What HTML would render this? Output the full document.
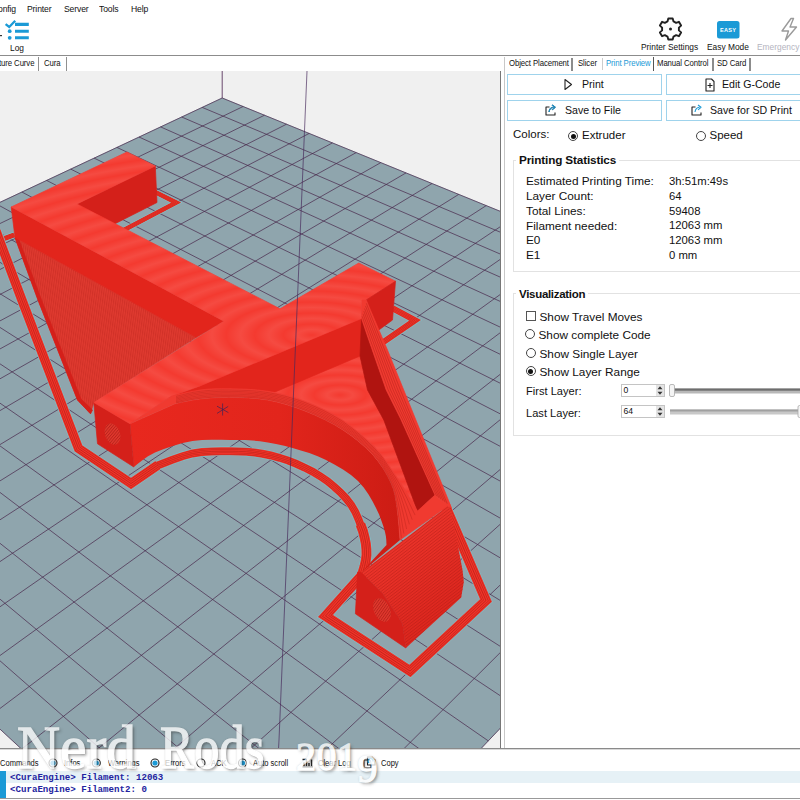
<!DOCTYPE html>
<html><head><meta charset="utf-8"><title>Repetier-Host</title>
<style>
html,body{margin:0;padding:0;}
body{width:800px;height:800px;overflow:hidden;background:#fff;position:relative;font-family:"Liberation Sans",sans-serif;color:#111;}
.abs{position:absolute;white-space:nowrap;}
.menu{font-size:9.4px;top:3px;color:#111;letter-spacing:-0.15px;transform:scaleX(0.92);transform-origin:0 0;}
.tl{font-size:9.1px;top:42px;color:#111;transform:scaleX(0.92);transform-origin:0 0;}
.tab{font-size:8.5px;top:58px;color:#111;letter-spacing:-0.1px;transform:scaleX(0.915);transform-origin:0 0;}
.btn{position:absolute;border:1px solid #9fd3ec;background:#fff;box-sizing:border-box;}
.btxt{font-size:10.6px;color:#111;}
.lbl{font-size:11.5px;color:#111;}
.st{font-size:11.8px;color:#111;}
.sv{font-size:11.3px;color:#111;}
.hd{font-size:11.75px;color:#111;font-weight:bold;letter-spacing:-0.15px;}
.radio{position:absolute;width:10px;height:10px;border:1px solid #444;border-radius:50%;background:#fff;box-sizing:border-box;}
.radio.on::after{content:"";position:absolute;left:1.5px;top:1.5px;width:5px;height:5px;border-radius:50%;background:#111;}
.lt{font-size:8.4px;top:757.5px;color:#111;transform:scaleX(0.9);transform-origin:0 0;}
.wm{font-family:"Liberation Serif",serif;color:#fff;-webkit-text-stroke:1.3px #fff;opacity:0.76;text-shadow:2px 2px 3px rgba(40,40,40,0.6),0 0 2px rgba(100,100,100,0.7);transform-origin:0 0;line-height:1.15;}
.log{font-family:"Liberation Mono",monospace;font-size:9.15px;color:#2323a0;left:10px;font-weight:bold;}
</style></head><body>
<!-- menu -->
<div class="abs menu" style="left:-2.5px">onfig</div>
<div class="abs menu" style="left:27px">Printer</div>
<div class="abs menu" style="left:64px">Server</div>
<div class="abs menu" style="left:99px">Tools</div>
<div class="abs menu" style="left:131px">Help</div>
<!-- toolbar -->
<svg class="abs" style="left:0;top:16px" width="800" height="40" viewBox="0 16 800 40">
 <g stroke="#1b9ad6" stroke-width="3.1" fill="none">
  <path d="M15,24.4 L28.8,24.4 M15,31.2 L28.8,31.2 M15,37.8 L28.8,37.8"/>
  <path d="M5.6,24.2 L9.2,27 L15.2,20.8" stroke-width="2.3"/>
 </g>
 <circle cx="9.7" cy="31.2" r="1.9" fill="#1b9ad6"/><circle cx="9.7" cy="37.8" r="1.9" fill="#1b9ad6"/>
 <rect x="0" y="35" width="2" height="1.2" fill="#333"/>
 <!-- gear -->
 <g transform="translate(670.5,29)" fill="none" stroke="#222" stroke-width="1.9" stroke-linejoin="round">
  <path d="M-2.2,-10.5 L2.2,-10.5 L3,-7.6 L5.6,-6.2 L8.4,-7.2 L10.6,-3.4 L8.4,-1.4 L8.4,1.4 L10.6,3.4 L8.4,7.2 L5.6,6.2 L3,7.6 L2.2,10.5 L-2.2,10.5 L-3,7.6 L-5.6,6.2 L-8.4,7.2 L-10.6,3.4 L-8.4,1.4 L-8.4,-1.4 L-10.6,-3.4 L-8.4,-7.2 L-5.6,-6.2 L-3,-7.6 Z"/>
  <circle r="1.5" fill="#222" stroke="none"/>
 </g>
 <rect x="717" y="21" width="22.5" height="17.5" rx="2.5" fill="#1b9ad6"/>
 <text x="728.2" y="31.8" font-size="5.6" font-weight="bold" fill="#fff" text-anchor="middle" font-family="Liberation Sans, sans-serif" letter-spacing="0.3">EASY</text>
 <path d="M791,18.5 L782,31 L788.5,31 L785.5,40 L796.5,27 L790,27 L793.5,18.5 Z" fill="none" stroke="#9a9a9a" stroke-width="1.4" stroke-linejoin="round"/>
</svg>
<div class="abs tl" style="left:9.8px;top:42.8px">Log</div>
<div class="abs tl" style="left:641px">Printer Settings</div>
<div class="abs tl" style="left:707px">Easy Mode</div>
<div class="abs tl" style="left:757px;color:#b4b4c0">Emergency</div>
<div class="abs" style="left:0;top:55px;width:800px;height:1px;background:#8c8c8c"></div>
<!-- left tabs -->
<div class="abs tab" style="left:-1px">ture Curve</div>
<div class="abs" style="left:37.5px;top:57px;width:1.5px;height:13.5px;background:#909090"></div>
<div class="abs tab" style="left:44px">Cura</div>
<div class="abs" style="left:65.5px;top:57px;width:1.5px;height:13.5px;background:#909090"></div>
<!-- 3D view -->
<div class="abs" style="left:0;top:71px;width:500px;height:677px;background:#f0f0f0;overflow:hidden">
<svg width="500" height="677" viewBox="0 71 500 677" style="position:absolute;left:0;top:0">
<defs><linearGradient id="wallg" gradientUnits="userSpaceOnUse" x1="130" y1="0" x2="400" y2="0"><stop offset="0" stop-color="#e8281e"/><stop offset="0.55" stop-color="#e2251c"/><stop offset="1" stop-color="#cc1c14"/></linearGradient><radialGradient id="moire" gradientUnits="userSpaceOnUse" cx="0" cy="0" r="11" gradientTransform="translate(312,335) scale(2.6,1)" spreadMethod="repeat"><stop offset="0" stop-color="#fff" stop-opacity="0"/><stop offset="0.5" stop-color="#fff" stop-opacity="0.085"/><stop offset="1" stop-color="#fff" stop-opacity="0"/></radialGradient><radialGradient id="moire2" gradientUnits="userSpaceOnUse" cx="0" cy="0" r="10" gradientTransform="translate(340,395) scale(2.6,1)" spreadMethod="repeat"><stop offset="0" stop-color="#fff" stop-opacity="0"/><stop offset="0.5" stop-color="#fff" stop-opacity="0.085"/><stop offset="1" stop-color="#fff" stop-opacity="0"/></radialGradient><pattern id="tri" width="2.2" height="8" patternUnits="userSpaceOnUse" patternTransform="rotate(8)"><rect width="1" height="8" fill="#b8241c" opacity="0.4"/></pattern><pattern id="lay" width="8" height="2.4" patternUnits="userSpaceOnUse" patternTransform="rotate(-37.5)"><rect width="8" height="0.8" fill="#a81a12" opacity="0.42"/></pattern><pattern id="hole" width="8" height="2.2" patternUnits="userSpaceOnUse" patternTransform="rotate(-30)"><rect width="8" height="2.2" fill="#e2382e"/><rect width="8" height="0.9" fill="#b8241c"/></pattern><linearGradient id="blk" x1="0" y1="0" x2="0.6" y2="1"><stop offset="0" stop-color="#f43c32"/><stop offset="1" stop-color="#da241c"/></linearGradient></defs>
<polygon points="222.2,98.0 853.4,355.3 266.1,975.5 -377.5,379.6" fill="#8fa5ad" stroke="#8fa5ad" stroke-width="0.7" stroke-linejoin="round" />
<path d="M222.2,98.0 L-377.5,379.6 M222.2,98.0 L853.4,355.3 M243.1,106.5 L-359.3,396.5 M202.2,107.4 L836.7,373.0 M264.5,115.2 L-340.4,414.0 M181.7,117.0 L819.3,391.3 M286.5,124.2 L-320.8,432.1 M160.6,126.9 L801.3,410.3 M309.2,133.4 L-300.5,451.0 M139.0,137.0 L782.7,430.0 M332.4,142.9 L-279.4,470.5 M116.9,147.4 L763.3,450.5 M356.2,152.6 L-257.4,490.8 M94.1,158.1 L743.2,471.7 M380.8,162.6 L-234.6,512.0 M70.7,169.1 L722.2,493.9 M406.0,172.9 L-210.8,534.0 M46.6,180.4 L700.4,516.9 M432.0,183.5 L-186.0,557.0 M21.9,192.0 L677.8,540.8 M458.7,194.4 L-160.1,580.9 M-3.5,204.0 L654.1,565.8 M486.2,205.6 L-133.2,605.9 M-29.7,216.3 L629.5,591.8 M514.6,217.1 L-105.0,631.9 M-56.7,228.9 L603.7,619.0 M543.8,229.1 L-75.5,659.2 M-84.4,242.0 L576.8,647.4 M573.9,241.3 L-44.7,687.8 M-113.0,255.4 L548.6,677.2 M605.0,254.0 L-12.3,717.7 M-142.5,269.3 L519.2,708.3 M637.1,267.1 L21.6,749.1 M-173.0,283.5 L488.3,740.9 M670.2,280.6 L57.2,782.1 M-204.3,298.3 L455.8,775.2 M704.4,294.5 L94.7,816.8 M-236.7,313.5 L421.7,811.2 M739.8,308.9 L134.1,853.3 M-270.2,329.2 L385.9,849.1 M776.4,323.9 L175.7,891.8 M-304.8,345.4 L348.1,889.0 M814.2,339.3 L219.7,932.5 M-340.5,362.2 L308.2,931.1 M853.4,355.3 L266.1,975.5 M-377.5,379.6 L266.1,975.5" stroke="#48264a" stroke-width="0.7" fill="none"/>
<path d="M222.2,98 L222.2,60" stroke="#5a3560" stroke-width="0.9" fill="none"/>
<polyline points="-8.0,243.0 14.0,235.0" fill="none" stroke="#7cc4cc" stroke-width="6.2" stroke-linejoin="miter" />
<polyline points="-8.0,243.0 14.0,235.0" fill="none" stroke="#f03329" stroke-width="5" stroke-linejoin="miter" />
<polyline points="-8.0,243.0 14.0,235.0" fill="none" stroke="#c4261c" stroke-width="4.0" stroke-linejoin="miter" />
<polyline points="-8.0,243.0 14.0,235.0" fill="none" stroke="#f03329" stroke-width="3.4" stroke-linejoin="miter" />
<polyline points="-8.0,243.0 14.0,235.0" fill="none" stroke="#c4261c" stroke-width="2.3" stroke-linejoin="miter" />
<polyline points="-8.0,243.0 14.0,235.0" fill="none" stroke="#f03329" stroke-width="1.7" stroke-linejoin="miter" />
<polyline points="-8.0,243.0 14.0,235.0" fill="none" stroke="#c4261c" stroke-width="0.5" stroke-linejoin="miter" />
<polyline points="150.0,469.5 150.1,469.2 150.2,468.8 151.3,468.0 155.0,466.5 162.1,463.7 171.7,460.0 182.4,456.2 192.5,453.5 202.0,452.1 211.6,451.4 221.0,451.2 230.0,451.2 238.4,451.4 246.5,451.7 254.4,452.5 262.5,453.8 270.9,455.5 279.5,457.8 288.0,460.5 296.2,463.8 304.4,467.5 312.5,471.6 320.3,476.3 327.5,481.2 334.2,486.7 340.6,492.6 346.3,498.7 351.2,505.0 355.3,512.0 358.6,519.6 361.2,526.5 363.0,531.2" fill="none" stroke="#7cc4cc" stroke-width="9.2" stroke-linejoin="miter" />
<polyline points="150.0,469.5 150.1,469.2 150.2,468.8 151.3,468.0 155.0,466.5 162.1,463.7 171.7,460.0 182.4,456.2 192.5,453.5 202.0,452.1 211.6,451.4 221.0,451.2 230.0,451.2 238.4,451.4 246.5,451.7 254.4,452.5 262.5,453.8 270.9,455.5 279.5,457.8 288.0,460.5 296.2,463.8 304.4,467.5 312.5,471.6 320.3,476.3 327.5,481.2 334.2,486.7 340.6,492.6 346.3,498.7 351.2,505.0 355.3,512.0 358.6,519.6 361.2,526.5 363.0,531.2" fill="none" stroke="#f03329" stroke-width="8" stroke-linejoin="miter" />
<polyline points="150.0,469.5 150.1,469.2 150.2,468.8 151.3,468.0 155.0,466.5 162.1,463.7 171.7,460.0 182.4,456.2 192.5,453.5 202.0,452.1 211.6,451.4 221.0,451.2 230.0,451.2 238.4,451.4 246.5,451.7 254.4,452.5 262.5,453.8 270.9,455.5 279.5,457.8 288.0,460.5 296.2,463.8 304.4,467.5 312.5,471.6 320.3,476.3 327.5,481.2 334.2,486.7 340.6,492.6 346.3,498.7 351.2,505.0 355.3,512.0 358.6,519.6 361.2,526.5 363.0,531.2" fill="none" stroke="#c4261c" stroke-width="6.4" stroke-linejoin="miter" />
<polyline points="150.0,469.5 150.1,469.2 150.2,468.8 151.3,468.0 155.0,466.5 162.1,463.7 171.7,460.0 182.4,456.2 192.5,453.5 202.0,452.1 211.6,451.4 221.0,451.2 230.0,451.2 238.4,451.4 246.5,451.7 254.4,452.5 262.5,453.8 270.9,455.5 279.5,457.8 288.0,460.5 296.2,463.8 304.4,467.5 312.5,471.6 320.3,476.3 327.5,481.2 334.2,486.7 340.6,492.6 346.3,498.7 351.2,505.0 355.3,512.0 358.6,519.6 361.2,526.5 363.0,531.2" fill="none" stroke="#f03329" stroke-width="5.44" stroke-linejoin="miter" />
<polyline points="150.0,469.5 150.1,469.2 150.2,468.8 151.3,468.0 155.0,466.5 162.1,463.7 171.7,460.0 182.4,456.2 192.5,453.5 202.0,452.1 211.6,451.4 221.0,451.2 230.0,451.2 238.4,451.4 246.5,451.7 254.4,452.5 262.5,453.8 270.9,455.5 279.5,457.8 288.0,460.5 296.2,463.8 304.4,467.5 312.5,471.6 320.3,476.3 327.5,481.2 334.2,486.7 340.6,492.6 346.3,498.7 351.2,505.0 355.3,512.0 358.6,519.6 361.2,526.5 363.0,531.2" fill="none" stroke="#c4261c" stroke-width="3.68" stroke-linejoin="miter" />
<polyline points="150.0,469.5 150.1,469.2 150.2,468.8 151.3,468.0 155.0,466.5 162.1,463.7 171.7,460.0 182.4,456.2 192.5,453.5 202.0,452.1 211.6,451.4 221.0,451.2 230.0,451.2 238.4,451.4 246.5,451.7 254.4,452.5 262.5,453.8 270.9,455.5 279.5,457.8 288.0,460.5 296.2,463.8 304.4,467.5 312.5,471.6 320.3,476.3 327.5,481.2 334.2,486.7 340.6,492.6 346.3,498.7 351.2,505.0 355.3,512.0 358.6,519.6 361.2,526.5 363.0,531.2" fill="none" stroke="#f03329" stroke-width="2.72" stroke-linejoin="miter" />
<polyline points="150.0,469.5 150.1,469.2 150.2,468.8 151.3,468.0 155.0,466.5 162.1,463.7 171.7,460.0 182.4,456.2 192.5,453.5 202.0,452.1 211.6,451.4 221.0,451.2 230.0,451.2 238.4,451.4 246.5,451.7 254.4,452.5 262.5,453.8 270.9,455.5 279.5,457.8 288.0,460.5 296.2,463.8 304.4,467.5 312.5,471.6 320.3,476.3 327.5,481.2 334.2,486.7 340.6,492.6 346.3,498.7 351.2,505.0 355.3,512.0 358.6,519.6 361.2,526.5 363.0,531.2" fill="none" stroke="#c4261c" stroke-width="0.8" stroke-linejoin="miter" />
<polyline points="-4.0,231.0 21.9,300.0 78.5,448.5 131.0,483.5 158.0,465.0" fill="none" stroke="#7cc4cc" stroke-width="10.7" stroke-linejoin="miter" />
<polyline points="-4.0,231.0 21.9,300.0 78.5,448.5 131.0,483.5 158.0,465.0" fill="none" stroke="#f03329" stroke-width="9.5" stroke-linejoin="miter" />
<polyline points="-4.0,231.0 21.9,300.0 78.5,448.5 131.0,483.5 158.0,465.0" fill="none" stroke="#c4261c" stroke-width="7.6" stroke-linejoin="miter" />
<polyline points="-4.0,231.0 21.9,300.0 78.5,448.5 131.0,483.5 158.0,465.0" fill="none" stroke="#f03329" stroke-width="6.46" stroke-linejoin="miter" />
<polyline points="-4.0,231.0 21.9,300.0 78.5,448.5 131.0,483.5 158.0,465.0" fill="none" stroke="#c4261c" stroke-width="4.37" stroke-linejoin="miter" />
<polyline points="-4.0,231.0 21.9,300.0 78.5,448.5 131.0,483.5 158.0,465.0" fill="none" stroke="#f03329" stroke-width="3.23" stroke-linejoin="miter" />
<polyline points="-4.0,231.0 21.9,300.0 78.5,448.5 131.0,483.5 158.0,465.0" fill="none" stroke="#c4261c" stroke-width="0.95" stroke-linejoin="miter" />
<polyline points="360.4,524.2 363.0,531.2 364.6,537.5 365.8,543.5 366.4,549.4 366.5,555.0 365.8,560.7 364.5,566.5 363.0,571.5 362.0,575.0 325.5,616.0 410.0,671.0 486.0,600.5 445.0,505.0" fill="none" stroke="#7cc4cc" stroke-width="11.2" stroke-linejoin="miter" />
<polyline points="360.4,524.2 363.0,531.2 364.6,537.5 365.8,543.5 366.4,549.4 366.5,555.0 365.8,560.7 364.5,566.5 363.0,571.5 362.0,575.0 325.5,616.0 410.0,671.0 486.0,600.5 445.0,505.0" fill="none" stroke="#f03329" stroke-width="10" stroke-linejoin="miter" />
<polyline points="360.4,524.2 363.0,531.2 364.6,537.5 365.8,543.5 366.4,549.4 366.5,555.0 365.8,560.7 364.5,566.5 363.0,571.5 362.0,575.0 325.5,616.0 410.0,671.0 486.0,600.5 445.0,505.0" fill="none" stroke="#c4261c" stroke-width="8.0" stroke-linejoin="miter" />
<polyline points="360.4,524.2 363.0,531.2 364.6,537.5 365.8,543.5 366.4,549.4 366.5,555.0 365.8,560.7 364.5,566.5 363.0,571.5 362.0,575.0 325.5,616.0 410.0,671.0 486.0,600.5 445.0,505.0" fill="none" stroke="#f03329" stroke-width="6.8" stroke-linejoin="miter" />
<polyline points="360.4,524.2 363.0,531.2 364.6,537.5 365.8,543.5 366.4,549.4 366.5,555.0 365.8,560.7 364.5,566.5 363.0,571.5 362.0,575.0 325.5,616.0 410.0,671.0 486.0,600.5 445.0,505.0" fill="none" stroke="#c4261c" stroke-width="4.6" stroke-linejoin="miter" />
<polyline points="360.4,524.2 363.0,531.2 364.6,537.5 365.8,543.5 366.4,549.4 366.5,555.0 365.8,560.7 364.5,566.5 363.0,571.5 362.0,575.0 325.5,616.0 410.0,671.0 486.0,600.5 445.0,505.0" fill="none" stroke="#f03329" stroke-width="3.4" stroke-linejoin="miter" />
<polyline points="360.4,524.2 363.0,531.2 364.6,537.5 365.8,543.5 366.4,549.4 366.5,555.0 365.8,560.7 364.5,566.5 363.0,571.5 362.0,575.0 325.5,616.0 410.0,671.0 486.0,600.5 445.0,505.0" fill="none" stroke="#c4261c" stroke-width="1.0" stroke-linejoin="miter" />
<polyline points="382.0,343.0 415.0,320.3 393.0,308.5" fill="none" stroke="#7cc4cc" stroke-width="7.5" stroke-linejoin="miter" />
<polyline points="382.0,343.0 415.0,320.3 393.0,308.5" fill="none" stroke="#f03329" stroke-width="6.3" stroke-linejoin="miter" />
<polyline points="382.0,343.0 415.0,320.3 393.0,308.5" fill="none" stroke="#c4261c" stroke-width="5.04" stroke-linejoin="miter" />
<polyline points="382.0,343.0 415.0,320.3 393.0,308.5" fill="none" stroke="#f03329" stroke-width="4.28" stroke-linejoin="miter" />
<polyline points="382.0,343.0 415.0,320.3 393.0,308.5" fill="none" stroke="#c4261c" stroke-width="2.9" stroke-linejoin="miter" />
<polyline points="382.0,343.0 415.0,320.3 393.0,308.5" fill="none" stroke="#f03329" stroke-width="2.14" stroke-linejoin="miter" />
<polyline points="382.0,343.0 415.0,320.3 393.0,308.5" fill="none" stroke="#c4261c" stroke-width="0.63" stroke-linejoin="miter" />
<polyline points="155.0,192.0 176.2,202.6 122.0,231.0" fill="none" stroke="#7cc4cc" stroke-width="5.8" stroke-linejoin="miter" />
<polyline points="155.0,192.0 176.2,202.6 122.0,231.0" fill="none" stroke="#f03329" stroke-width="4.6" stroke-linejoin="miter" />
<polyline points="155.0,192.0 176.2,202.6 122.0,231.0" fill="none" stroke="#c4261c" stroke-width="3.68" stroke-linejoin="miter" />
<polyline points="155.0,192.0 176.2,202.6 122.0,231.0" fill="none" stroke="#f03329" stroke-width="3.13" stroke-linejoin="miter" />
<polyline points="155.0,192.0 176.2,202.6 122.0,231.0" fill="none" stroke="#c4261c" stroke-width="2.12" stroke-linejoin="miter" />
<polyline points="155.0,192.0 176.2,202.6 122.0,231.0" fill="none" stroke="#f03329" stroke-width="1.56" stroke-linejoin="miter" />
<polyline points="155.0,192.0 176.2,202.6 122.0,231.0" fill="none" stroke="#c4261c" stroke-width="0.46" stroke-linejoin="miter" />
<polygon points="77.0,204.0 155.3,166.0 157.0,202.5 112.5,225.0 105.0,228.0" fill="#d4201a" stroke="#d4201a" stroke-width="0.7" stroke-linejoin="round" />
<polygon points="15.0,237.5 196.2,337.5 93.8,402.5 90.5,413.8 77.5,400.0 38.0,300.0" fill="#e03a30" stroke="#e03a30" stroke-width="0.7" stroke-linejoin="round" />
<polygon points="15.0,237.5 196.2,337.5 93.8,402.5 90.5,413.8 77.5,400.0 38.0,300.0" fill="url(#tri)" stroke="none" stroke-width="0.7" stroke-linejoin="round" />
<polygon points="15.0,237.5 18.5,238.5 41.5,300.0 81.0,399.0 92.5,410.0 90.5,413.8 77.5,400.0 38.0,300.0" fill="#d4201a" stroke="#d4201a" stroke-width="0.7" stroke-linejoin="round" />
<polygon points="11.2,207.0 223.8,321.2 196.2,337.5 15.0,237.5" fill="#e2251c" stroke="#e2251c" stroke-width="0.7" stroke-linejoin="round" />
<polygon points="130.0,423.8 175.0,403.8 179.4,402.8 185.6,401.5 192.8,400.1 200.0,399.0 207.0,398.3 214.2,397.8 221.9,397.5 230.0,397.5 238.8,397.6 248.3,398.0 257.9,398.7 267.5,400.0 276.9,402.0 286.2,404.5 295.6,407.5 305.0,411.0 314.7,415.0 324.5,419.6 334.1,424.6 343.0,430.0 351.3,435.8 359.2,441.9 366.5,448.4 373.0,455.0 378.6,461.9 383.5,469.0 387.6,476.1 391.0,483.0 393.4,489.3 394.9,495.2 396.0,501.3 397.0,508.0 398.0,516.3 398.9,525.6 399.5,534.1 400.0,540.0 361.2,572.5 386.5,545.0 386.4,542.9 386.3,540.0 385.9,536.3 385.0,532.0 383.5,526.8 381.5,520.9 379.1,514.5 376.0,508.0 372.5,501.3 368.4,494.3 363.7,487.4 358.0,481.0 351.0,475.1 343.0,469.6 334.4,464.5 326.0,460.0 317.7,456.2 309.3,453.1 300.8,450.4 292.5,448.0 284.2,445.8 276.0,444.0 267.9,442.4 260.0,441.2 252.5,440.5 245.3,440.1 238.0,440.0 230.0,440.0 221.2,439.8 211.7,439.7 202.1,440.0 192.5,441.0 182.7,443.1 172.7,445.9 163.2,449.2 155.0,452.5 148.0,456.3 142.0,460.5 137.2,464.3 133.8,467.0" fill="url(#wallg)" stroke="none" stroke-width="0.7" stroke-linejoin="round" />
<polygon points="93.8,402.5 130.0,423.8 133.8,467.0 97.5,443.8" fill="#d4201a" stroke="#d4201a" stroke-width="0.7" stroke-linejoin="round" />
<ellipse cx="112.5" cy="434" rx="7.5" ry="11" fill="url(#hole)" transform="rotate(-20 112.5 434)"/>
<polygon points="200.0,386.0 361.5,318.5 372.0,356.0 392.0,420.0 425.0,505.0 417.5,511.0 415.3,507.2 412.1,501.8 408.5,495.7 405.0,490.0 401.9,485.0 398.8,480.1 395.5,475.2 392.0,470.0 388.4,464.7 384.7,459.2 380.4,453.5 375.0,447.5 368.1,440.8 360.0,433.5 351.3,426.4 342.5,420.0 333.5,414.5 324.1,409.5 314.5,405.1 305.0,401.2 295.6,398.0 286.2,395.2 276.9,393.0 267.5,391.2 257.9,390.0 248.3,389.3 238.8,388.9 230.0,388.8 221.9,388.7 214.5,388.8 207.2,389.2 200.0,390.0" fill="#f43a30" stroke="#f43a30" stroke-width="0.7" stroke-linejoin="round" />
<polygon points="200.0,386.0 361.5,318.5 372.0,356.0 392.0,420.0 425.0,505.0 417.5,511.0 415.3,507.2 412.1,501.8 408.5,495.7 405.0,490.0 401.9,485.0 398.8,480.1 395.5,475.2 392.0,470.0 388.4,464.7 384.7,459.2 380.4,453.5 375.0,447.5 368.1,440.8 360.0,433.5 351.3,426.4 342.5,420.0 333.5,414.5 324.1,409.5 314.5,405.1 305.0,401.2 295.6,398.0 286.2,395.2 276.9,393.0 267.5,391.2 257.9,390.0 248.3,389.3 238.8,388.9 230.0,388.8 221.9,388.7 214.5,388.8 207.2,389.2 200.0,390.0" fill="url(#moire2)" stroke="none" stroke-width="0.7" stroke-linejoin="round" />
<polygon points="171.2,396.2 200.0,386.0 361.5,318.5 360.0,356.0 275.0,392.0 230.0,388.8" fill="#e2251c" stroke="#e2251c" stroke-width="0.7" stroke-linejoin="round" />
<polygon points="361.5,318.5 360.0,356.0 367.5,390.0 383.8,420.0 417.5,511.0 435.0,495.0 401.2,420.0 386.2,390.0 368.8,340.0" fill="#b01410" stroke="#b01410" stroke-width="0.7" stroke-linejoin="round" />
<polygon points="11.2,207.0 127.0,152.0 155.3,166.0 77.0,204.0 280.0,308.8 358.8,263.0 395.5,281.2 366.2,300.0 362.0,300.0 361.5,318.5 200.0,386.0 171.2,396.2 130.0,423.8 93.8,402.5 223.8,321.2" fill="#f43a30" stroke="#f43a30" stroke-width="0.7" stroke-linejoin="round" />
<polygon points="11.2,207.0 127.0,152.0 155.3,166.0 77.0,204.0 280.0,308.8 358.8,263.0 395.5,281.2 366.2,300.0 362.0,300.0 361.5,318.5 200.0,386.0 171.2,396.2 130.0,423.8 93.8,402.5 223.8,321.2" fill="url(#moire)" stroke="none" stroke-width="0.7" stroke-linejoin="round" />
<polygon points="366.2,300.0 395.5,281.2 392.5,320.0 377.5,331.0" fill="#d4201a" stroke="#d4201a" stroke-width="0.7" stroke-linejoin="round" />
<polygon points="362.0,300.0 366.2,300.0 387.5,350.0 407.8,400.0 424.0,440.0 451.4,507.5 447.5,506.2 435.0,495.0 401.2,420.0 386.2,390.0 368.8,340.0 361.5,318.5" fill="#f03a30" stroke="#f03a30" stroke-width="0.7" stroke-linejoin="round" />
<polygon points="171.2,396.2 176.4,395.0 183.8,393.2 192.1,391.4 200.0,390.0 207.2,389.2 214.5,388.8 221.9,388.7 230.0,388.8 238.8,388.9 248.3,389.3 257.9,390.0 267.5,391.2 276.9,393.0 286.2,395.2 295.6,398.0 305.0,401.2 314.5,405.1 324.1,409.5 333.5,414.5 342.5,420.0 351.3,426.4 360.0,433.5 368.1,440.8 375.0,447.5 380.4,453.5 384.7,459.2 388.4,464.7 392.0,470.0 395.5,475.2 398.8,480.1 401.9,485.0 405.0,490.0 408.5,495.7 412.1,501.8 415.3,507.2 417.5,511.0 435.0,495.0 447.5,506.2 400.0,540.0 399.5,534.1 398.9,525.6 398.0,516.3 397.0,508.0 396.0,501.3 394.9,495.2 393.4,489.3 391.0,483.0 387.6,476.1 383.5,469.0 378.6,461.9 373.0,455.0 366.5,448.4 359.2,441.9 351.3,435.8 343.0,430.0 334.1,424.6 324.5,419.6 314.7,415.0 305.0,411.0 295.6,407.5 286.2,404.5 276.9,402.0 267.5,400.0 257.9,398.7 248.3,398.0 238.8,397.6 230.0,397.5 221.9,397.5 214.2,397.8 207.0,398.3 200.0,399.0 192.8,400.1 185.6,401.5 179.4,402.8 175.0,403.8 130.0,423.8" fill="#f03a30" stroke="#f03a30" stroke-width="0.7" stroke-linejoin="round" />
<polygon points="361.2,572.5 447.5,506.2 451.0,510.0 462.5,570.0 463.8,582.0 461.2,597.5 405.8,648.0 402.5,623.5 383.0,594.0" fill="url(#blk)" stroke="none" stroke-width="0.7" stroke-linejoin="round" />
<polygon points="361.2,572.5 447.5,506.2 451.0,510.0 462.5,570.0 463.8,582.0 461.2,597.5 405.8,648.0 402.5,623.5 383.0,594.0" fill="url(#lay)" stroke="none" stroke-width="0.7" stroke-linejoin="round" />
<polyline points="176.0,396.4 180.2,395.4 186.1,393.9 193.0,392.4 200.0,391.3 206.9,390.6 214.2,390.1 221.8,389.9 230.0,390.0 238.8,390.2 248.3,390.5 257.9,391.2 267.5,392.5 276.9,394.3 286.2,396.5 295.6,399.3 305.0,402.6 314.5,406.5 324.1,410.9 333.6,415.9 342.6,421.4 351.3,427.7 359.9,434.7 367.9,441.8 374.7,448.6 380.2,454.7 384.5,460.5 388.2,466.2 391.7,471.7 395.1,476.9 398.1,481.9 400.9,486.9 403.7,492.1 406.9,498.2 410.1,504.9 413.0,510.9 415.1,515.1" fill="none" stroke="#a01810" stroke-width="0.6" stroke-linejoin="miter" opacity="0.5"/>
<polyline points="176.0,397.8 180.2,396.8 186.1,395.3 193.0,393.8 200.0,392.7 206.9,392.0 214.2,391.6 221.8,391.3 230.0,391.4 238.8,391.5 248.3,391.9 257.9,392.6 267.5,393.9 276.9,395.7 286.2,398.0 295.6,400.8 305.0,404.2 314.5,408.1 324.2,412.6 333.6,417.5 342.6,423.0 351.3,429.2 359.8,436.1 367.6,443.1 374.4,449.8 379.8,456.0 384.2,462.0 387.9,467.9 391.4,473.6 394.6,478.9 397.3,484.0 399.8,489.0 402.3,494.5 405.1,501.1 408.0,508.4 410.5,515.1 412.2,519.7" fill="none" stroke="#a01810" stroke-width="0.6" stroke-linejoin="miter" opacity="0.5"/>
<polyline points="176.0,399.1 180.2,398.1 186.1,396.7 193.0,395.2 200.0,394.1 206.9,393.5 214.2,393.0 221.8,392.8 230.0,392.8 238.8,392.9 248.3,393.3 257.9,394.0 267.5,395.3 276.9,397.1 286.2,399.5 295.6,402.3 305.0,405.7 314.6,409.7 324.2,414.2 333.7,419.2 342.7,424.6 351.4,430.7 359.7,437.4 367.4,444.3 374.1,450.9 379.5,457.3 383.9,463.5 387.7,469.6 391.1,475.5 394.1,480.9 396.5,486.0 398.7,491.2 400.9,496.9 403.3,504.0 405.8,512.0 407.9,519.3 409.4,524.3" fill="none" stroke="#a01810" stroke-width="0.6" stroke-linejoin="miter" opacity="0.5"/>
<polyline points="176.0,400.4 180.2,399.4 186.1,398.1 193.0,396.7 200.0,395.6 206.9,394.9 214.2,394.4 221.8,394.2 230.0,394.2 238.8,394.3 248.3,394.7 257.9,395.4 267.5,396.7 276.9,398.6 286.2,401.0 295.6,403.9 305.0,407.3 314.6,411.3 324.3,415.8 333.8,420.8 342.8,426.2 351.4,432.2 359.6,438.8 367.2,445.5 373.8,452.1 379.2,458.6 383.7,465.1 387.4,471.4 390.8,477.4 393.5,483.0 395.7,488.1 397.6,493.4 399.4,499.3 401.5,506.9 403.6,515.5 405.4,523.5 406.6,529.0" fill="none" stroke="#a01810" stroke-width="0.6" stroke-linejoin="miter" opacity="0.5"/>
<polyline points="176.0,401.7 180.2,400.8 186.1,399.4 193.0,398.1 200.0,397.0 206.9,396.3 214.2,395.8 221.8,395.6 230.0,395.6 238.8,395.7 248.3,396.1 257.9,396.8 267.5,398.1 276.9,400.0 286.2,402.4 295.6,405.4 305.0,408.9 314.6,412.9 324.4,417.4 333.9,422.4 342.9,427.8 351.4,433.7 359.5,440.1 366.9,446.8 373.4,453.4 378.9,459.9 383.4,466.6 387.2,473.1 390.4,479.4 393.0,485.0 394.9,490.2 396.4,495.5 398.0,501.7 399.7,509.8 401.4,519.1 402.8,527.7 403.9,533.6" fill="none" stroke="#a01810" stroke-width="0.6" stroke-linejoin="miter" opacity="0.5"/>
<polyline points="176.0,402.8 180.2,402.0 186.1,400.7 193.0,399.3 200.0,398.3 206.9,397.6 214.2,397.1 221.8,396.8 230.0,396.8 238.8,396.9 248.3,397.3 257.9,398.0 267.5,399.3 276.9,401.2 286.2,403.7 295.6,406.7 305.0,410.2 314.6,414.3 324.4,418.8 334.0,423.8 343.0,429.2 351.4,435.0 359.4,441.3 366.7,447.9 373.2,454.4 378.6,461.0 383.1,467.9 387.0,474.6 390.2,481.0 392.6,486.7 394.2,492.0 395.5,497.4 396.7,503.8 398.1,512.3 399.5,522.2 400.6,531.3 401.4,537.7" fill="none" stroke="#a01810" stroke-width="0.6" stroke-linejoin="miter" opacity="0.5"/>
<polyline points="362.2,316.4 370.4,340.0 388.2,390.0 402.8,420.0 436.7,496.2" fill="none" stroke="#a01810" stroke-width="0.6" stroke-linejoin="miter" opacity="0.6"/>
<polyline points="363.0,313.8 372.5,340.0 390.6,390.0 404.8,420.0 438.8,497.7" fill="none" stroke="#a01810" stroke-width="0.6" stroke-linejoin="miter" opacity="0.6"/>
<polyline points="363.8,311.1 374.5,340.0 393.1,390.0 406.8,420.0 440.9,499.2" fill="none" stroke="#a01810" stroke-width="0.6" stroke-linejoin="miter" opacity="0.6"/>
<polyline points="364.6,308.5 376.6,340.0 395.5,390.0 408.8,420.0 443.0,500.7" fill="none" stroke="#a01810" stroke-width="0.6" stroke-linejoin="miter" opacity="0.6"/>
<polyline points="365.5,305.9 378.6,340.0 397.9,390.0 410.8,420.0 445.1,502.2" fill="none" stroke="#a01810" stroke-width="0.6" stroke-linejoin="miter" opacity="0.6"/>
<polyline points="366.3,303.3 380.7,340.0 400.4,390.0 412.8,420.0 447.2,503.7" fill="none" stroke="#a01810" stroke-width="0.6" stroke-linejoin="miter" opacity="0.6"/>
<polygon points="361.2,572.5 383.0,594.0 402.5,623.5 405.8,648.0 355.4,613.8 357.6,572.0" fill="#d4201a" stroke="#d4201a" stroke-width="0.7" stroke-linejoin="round" />
<ellipse cx="382" cy="610" rx="8" ry="12.5" fill="url(#hole)" transform="rotate(-25 382 610)"/>
<path d="M222.6,403.5 L222.6,415.5 M217,406.2 L228.4,412.6 M228.2,406.4 L217,413.4" stroke="#3c2458" stroke-width="0.7"/>
<path d="M266.1,975.5 L279,740 L307,71 L307.5,60" stroke="#45285a" stroke-width="0.8" fill="none" opacity="0.85"/>
</svg>
</div>
<div class="abs" style="left:500px;top:71px;width:1px;height:678px;background:#777"></div>
<div class="abs" style="left:0;top:748px;width:800px;height:1px;background:#8a8a8a"></div>
<div class="abs" style="left:0;top:749px;width:800px;height:1px;background:#d8d8d8"></div>
<!-- right panel -->
<div class="abs" style="left:504px;top:57px;width:1px;height:691px;background:#c8c8c8"></div>
<div class="abs tab" style="left:508.5px">Object Placement</div>
<div class="abs" style="left:571px;top:58px;width:1.5px;height:13px;background:#8c8c8c"></div><div class="abs" style="left:602px;top:58px;width:1px;height:12px;background:#ccc"></div>
<div class="abs tab" style="left:578px">Slicer</div>
<div class="abs tab" style="left:605.5px;top:57.5px;color:#1b9ad6">Print Preview</div>
<div class="abs" style="left:652.5px;top:57px;width:1.5px;height:14px;background:#555"></div>
<div class="abs tab" style="left:656.5px">Manual Control</div>
<div class="abs" style="left:712px;top:58px;width:1.5px;height:13px;background:#8c8c8c"></div>
<div class="abs tab" style="left:716.5px">SD Card</div>
<div class="abs" style="left:749px;top:58px;width:1.5px;height:13px;background:#8c8c8c"></div>
<!-- buttons -->
<div class="btn" style="left:507px;top:74px;width:155px;height:21px"></div>
<div class="btn" style="left:666px;top:74px;width:140px;height:21px"></div>
<div class="btn" style="left:507px;top:100px;width:155px;height:21px"></div>
<div class="btn" style="left:666px;top:100px;width:140px;height:21px"></div>
<svg class="abs" style="left:500px;top:70px" width="300" height="55" viewBox="500 70 300 55" fill="none" stroke="#222" stroke-width="1.1" stroke-linejoin="round">
 <path d="M565,79.5 L571.5,84.5 L565,89.5 Z"/>
 <path d="M706,79 L711.5,79 L714,81.5 L714,91 L706,91 Z M710,83 L710,88 M707.5,85.5 L712.5,85.5" />
 <path d="M549.5,107 L546,107 L546,115 L555,115 L555,112.5 M549,112 C549.5,108.5 551,107.5 553.5,107.3 M552,105 L555,107.3 L552,109.8" />
 <path d="M549,112 C549.5,108.5 551,107.5 553.5,107.3 M552,105 L555,107.3 L552,109.8" stroke="#1b9ad6"/>
 <path d="M695.5,107 L692,107 L692,115 L701,115 L701,112.5" />
 <path d="M695,112 C695.5,108.5 697,107.5 699.5,107.3 M698,105 L701,107.3 L698,109.8" stroke="#1b9ad6"/>
</svg>
<div class="abs btxt" style="left:582px;top:78px">Print</div>
<div class="abs btxt" style="left:722px;top:78px">Edit G-Code</div>
<div class="abs btxt" style="left:565px;top:104px">Save to File</div>
<div class="abs btxt" style="left:710px;top:104px">Save for SD Print</div>
<div class="abs lbl" style="left:513px;top:128px">Colors:</div>
<div class="radio on" style="left:568px;top:131px"></div>
<div class="abs lbl" style="left:582px;top:129px">Extruder</div>
<div class="radio" style="left:696px;top:131px"></div>
<div class="abs lbl" style="left:709.5px;top:129px">Speed</div>
<!-- stats group -->
<div class="abs" style="left:513px;top:160px;width:300px;height:112px;border:1px solid #e2e2e2;box-sizing:border-box"></div>
<div class="abs hd" style="left:516px;top:153.3px;background:#fff;padding:0 3px">Printing Statistics</div>
<div class="abs st" style="left:526px;top:174.1px">Estimated Printing Time:</div><div class="abs sv" style="left:669px;top:175px">3h:51m:49s</div>
<div class="abs st" style="left:526px;top:188.9px">Layer Count:</div><div class="abs sv" style="left:669px;top:189.8px">64</div>
<div class="abs st" style="left:526px;top:203.7px">Total Lines:</div><div class="abs sv" style="left:669px;top:204.6px">59408</div>
<div class="abs st" style="left:526px;top:218.5px">Filament needed:</div><div class="abs sv" style="left:669px;top:219.4px">12063 mm</div>
<div class="abs st" style="left:526px;top:233.3px">E0</div><div class="abs sv" style="left:669px;top:234.2px">12063 mm</div>
<div class="abs st" style="left:526px;top:248.1px">E1</div><div class="abs sv" style="left:669px;top:249px">0 mm</div>
<!-- visualization group -->
<div class="abs" style="left:513px;top:293px;width:300px;height:143px;border:1px solid #e2e2e2;box-sizing:border-box"></div>
<div class="abs hd" style="left:516px;top:288px;background:#fff;padding:0 3px;font-size:11.5px;letter-spacing:-0.3px">Visualization</div>
<div class="abs" style="left:525.5px;top:311px;width:10px;height:10px;border:1px solid #555;box-sizing:border-box;background:#fff"></div>
<div class="abs st" style="left:539.5px;top:310px">Show Travel Moves</div>
<div class="radio" style="left:525px;top:329px"></div>
<div class="abs st" style="left:538.5px;top:327.5px">Show complete Code</div>
<div class="radio" style="left:525.5px;top:347.5px"></div>
<div class="abs st" style="left:539.5px;top:346.5px">Show Single Layer</div>
<div class="radio on" style="left:525.5px;top:366px"></div>
<div class="abs st" style="left:539.5px;top:365px">Show Layer Range</div>
<div class="abs st" style="left:526px;top:385px;font-size:11.1px">First Layer:</div>
<div class="abs st" style="left:526px;top:406.5px;font-size:11.1px">Last Layer:</div>
<div class="abs" style="left:621px;top:384px;width:44px;height:13px;border:1px solid #c4c4c4;box-sizing:border-box;font-size:8.6px;line-height:11px;padding-left:1.5px">0</div>
<div class="abs" style="left:621px;top:405px;width:44px;height:13px;border:1px solid #c4c4c4;box-sizing:border-box;font-size:8.6px;line-height:11px;padding-left:1.5px">64</div>
<svg class="abs" style="left:655px;top:383px" width="150" height="40" viewBox="655 383 150 40">
 <rect x="656" y="385" width="8" height="11" fill="#e4e4e4"/><rect x="656" y="406" width="8" height="11" fill="#e4e4e4"/>
 <rect x="670" y="388.5" width="135" height="5" fill="#b8b8b8"/><rect x="670" y="388.5" width="135" height="2.2" fill="#6e6e6e"/>
 <rect x="670" y="409.5" width="135" height="5" fill="#c8c8c8"/><rect x="670" y="409.5" width="135" height="2" fill="#a0a0a0"/>
 <path d="M657.5,389.3 L660,386.3 L662.5,389.3 Z M657.5,391.7 L660,394.7 L662.5,391.7 Z M657.5,410.3 L660,407.3 L662.5,410.3 Z M657.5,412.7 L660,415.7 L662.5,412.7 Z" fill="#333"/>
 <rect x="669.5" y="384.5" width="5" height="12" rx="1.5" fill="#f4f4f4" stroke="#aaa" stroke-width="0.8"/>
 <rect x="798" y="405.5" width="5" height="12" rx="1.5" fill="#f4f4f4" stroke="#aaa" stroke-width="0.8"/>
</svg>
<!-- log toolbar -->
<div class="abs lt" style="left:-0.5px">Commands</div>
<div class="abs lt" style="left:63.5px">Infos</div>
<div class="abs lt" style="left:107.5px">Warnings</div>
<div class="abs lt" style="left:165px">Errors</div>
<div class="abs lt" style="left:211px">ACK</div>
<div class="abs lt" style="left:252.5px">Auto scroll</div>
<div class="abs lt" style="left:317.5px">Clear Log</div>
<div class="abs lt" style="left:380.5px">Copy</div>
<svg class="abs" style="left:0;top:750px" width="500" height="24" viewBox="0 750 500 24" fill="none">
 <g stroke="#222" stroke-width="1.1">
 <circle cx="53" cy="763" r="4"/><circle cx="96.3" cy="763" r="4"/><circle cx="155" cy="763" r="4"/><circle cx="201" cy="763" r="4"/><circle cx="242.5" cy="763" r="4"/>
 </g>
 <g fill="#1b9ad6"><circle cx="53" cy="763" r="2.6"/><circle cx="96.3" cy="763" r="2.6"/><circle cx="155" cy="763" r="2.6"/><circle cx="242.5" cy="763" r="2.6"/></g>
 <path d="M302.5,767 L313,767 M304,767 L304,762.5 M306.500,767 L306.500,760.5 M309,767 L309,763 M311.500,767 L311.500,759.5 M302.5,759.5 L307,759.5" stroke="#222" stroke-width="1.5"/>
 <path d="M364,760 L364,768 L371,768 L371,765 M364,760 L367,760" stroke="#222" stroke-width="1.1"/>
 <path d="M367.5,765 L367.5,757 L372,757 L375,760 L375,765 Z" stroke="#222" stroke-width="1.1"/>
 <path d="M369,763 A2.5,2.5 0 1 1 373,761.5" stroke="#1b9ad6" stroke-width="1.2"/>
</svg>
<!-- log lines -->
<div class="abs" style="left:0;top:771px;width:800px;height:12px;background:#e6f1f6"></div>
<div class="abs" style="left:0;top:771px;width:5.5px;height:27px;background:#1b9ad6"></div>
<div class="abs" style="left:0;top:798px;width:800px;height:1px;background:#999"></div>
<div class="abs log" style="top:771.5px">&lt;CuraEngine&gt; Filament: 12063</div>
<div class="abs log" style="top:783.5px">&lt;CuraEngine&gt; Filament2: 0</div>
<!-- watermark -->
<div class="abs wm" style="left:17px;top:712px;font-size:62px;transform:scaleX(0.96)">Nerd</div>
<div class="abs wm" style="left:160px;top:712px;font-size:62px;transform:scaleX(0.82)">Rods</div>
<div class="abs wm" style="left:296px;top:734px;font-size:40px;letter-spacing:0.5px">201<span style="position:relative;top:12px">9</span></div>
</body></html>
